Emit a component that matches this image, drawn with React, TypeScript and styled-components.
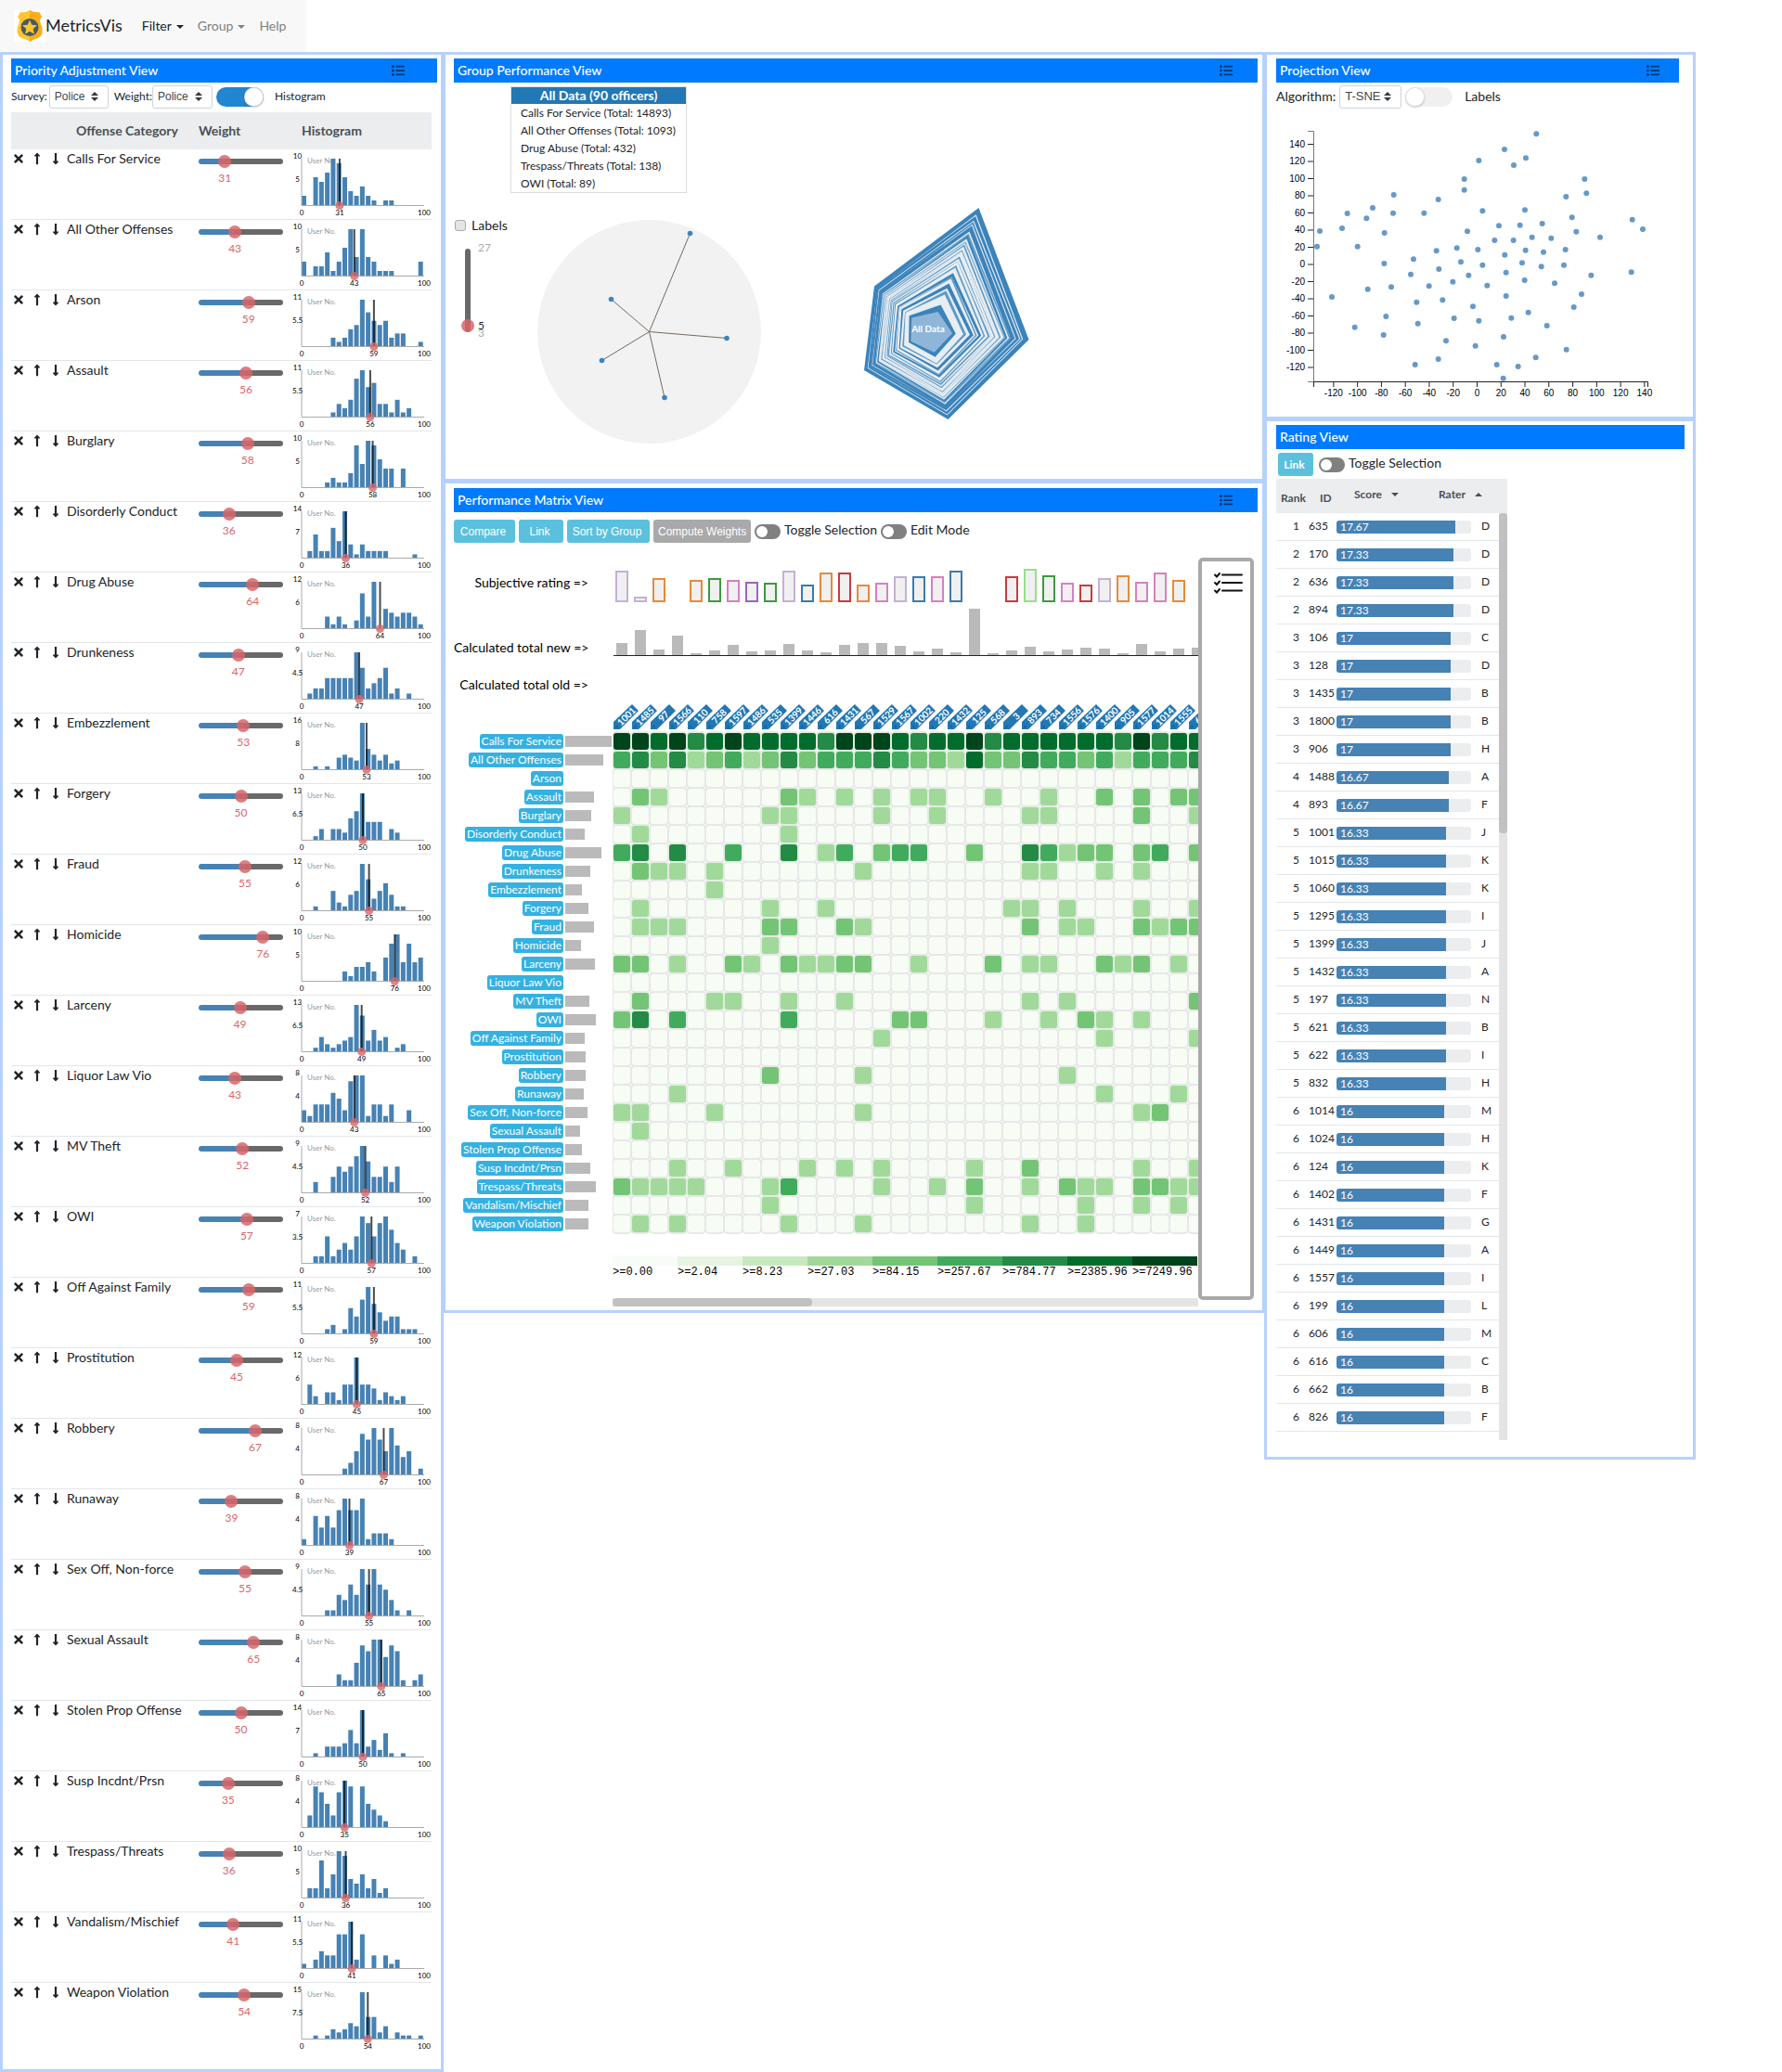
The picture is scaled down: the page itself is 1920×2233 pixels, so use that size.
import React, { useState } from "react";
import styled, { createGlobalStyle, css } from "styled-components";
import { FaList, FaTimes, FaLongArrowAltUp, FaLongArrowAltDown } from "react-icons/fa";

const STEEL = "#4682b4";
const INDIAN = "#d7666a";
const GREENS = ["#f7fcf5", "#e5f5e0", "#c7e9c0", "#a1d99b", "#74c476", "#41ab5d", "#238b45", "#006d2c", "#00441b"];
const SANS = `Lato, "Open Sans", sans-serif`;
const HELV = `"Liberation Sans", Arial, sans-serif`;

/* ------------------------------ data ------------------------------ */

type Offense = { name: string; weight: number; max: number; bins: number[]; bar: number; cells: Record<number, number> };

const offenses: Offense[] = [
  { name: "Calls For Service", weight: 31, max: 10, bins: [2,0,6,5,7,10,9,6,3,2,4,2,1,0,1,1,0,0,0,0,0], bar: 50,
    cells: Object.fromEntries([..."88786787777688876778677777768677"].map((d, i) => [i, +d])) },
  { name: "All Other Offenses", weight: 43, max: 10, bins: [3,0,2,2,5,1,3,6,10,4,10,4,3,1,1,1,0,0,0,0,3], bar: 41,
    cells: Object.fromEntries([..."56463453464555654437446554535556"].map((d, i) => [i, +d])) },
  { name: "Arson", weight: 59, max: 11, bins: [0,0,0,0,0,2,1,2,4,5,11,8,6,5,6,2,3,3,0,0,1], bar: 0, cells: {} },
  { name: "Assault", weight: 56, max: 11, bins: [0,0,0,0,0,1,3,2,4,9,11,7,8,3,3,1,4,1,2,0,0], bar: 31,
    cells: { 1: 4, 2: 3, 9: 4, 10: 3, 12: 3, 14: 3, 16: 3, 17: 3, 20: 3, 23: 3, 26: 4, 28: 4, 30: 4, 31: 4 } },
  { name: "Burglary", weight: 58, max: 10, bins: [0,0,0,0,1,2,1,1,3,9,5,10,9,6,4,4,0,4,0,0,0], bar: 28,
    cells: { 0: 3, 8: 3, 9: 3, 14: 3, 17: 3, 22: 3, 23: 3, 28: 4, 31: 3 } },
  { name: "Disorderly Conduct", weight: 36, max: 14, bins: [0,2,7,2,2,9,5,14,4,1,4,2,2,2,2,0,0,0,0,1,0], bar: 21,
    cells: { 1: 3, 9: 3 } },
  { name: "Drug Abuse", weight: 64, max: 12, bins: [0,0,0,0,3,1,3,1,0,2,9,3,12,0,5,4,3,4,4,3,1], bar: 39,
    cells: { 0: 5, 1: 6, 3: 6, 6: 5, 9: 6, 11: 3, 12: 5, 14: 4, 15: 5, 16: 5, 19: 4, 22: 6, 23: 5, 24: 3, 25: 4, 26: 4, 28: 4, 29: 5, 31: 4 } },
  { name: "Drunkeness", weight: 47, max: 9, bins: [0,1,2,2,4,4,4,4,4,9,6,2,3,4,6,1,2,0,1,0,0], bar: 27,
    cells: { 1: 4, 2: 3, 3: 3, 5: 3, 13: 3, 22: 3, 23: 3, 26: 3, 28: 3 } },
  { name: "Embezzlement", weight: 53, max: 16, bins: [0,0,1,0,1,0,4,5,4,3,16,7,5,3,5,2,3,0,0,0,0], bar: 18,
    cells: { 5: 3 } },
  { name: "Forgery", weight: 50, max: 13, bins: [0,0,1,3,0,3,3,2,6,8,13,5,5,5,0,3,2,0,0,0,0], bar: 25,
    cells: { 1: 3, 8: 3, 11: 3, 21: 3, 22: 3, 24: 3, 28: 3, 31: 3 } },
  { name: "Fraud", weight: 55, max: 12, bins: [0,0,1,0,0,5,2,1,4,5,12,8,3,5,7,4,1,1,0,0,0], bar: 31,
    cells: { 1: 3, 2: 3, 3: 3, 8: 4, 9: 4, 12: 4, 13: 3, 22: 4, 24: 3, 25: 3, 28: 4, 29: 3, 30: 4, 31: 4 } },
  { name: "Homicide", weight: 76, max: 10, bins: [0,0,0,0,0,0,0,2,1,3,3,4,2,0,5,8,10,4,8,4,5], bar: 17,
    cells: { 8: 3 } },
  { name: "Larceny", weight: 49, max: 13, bins: [0,0,1,4,2,1,2,3,4,13,10,3,6,3,4,0,1,2,0,0,0], bar: 32,
    cells: { 0: 4, 1: 4, 3: 3, 6: 4, 7: 3, 9: 4, 10: 3, 11: 3, 12: 4, 13: 4, 16: 3, 20: 4, 22: 3, 23: 3, 26: 4, 27: 3, 28: 4, 30: 3 } },
  { name: "Liquor Law Vio", weight: 43, max: 8, bins: [2,1,3,3,3,5,4,2,7,8,8,1,3,3,1,3,0,0,2,0,0], bar: 0, cells: {} },
  { name: "MV Theft", weight: 52, max: 9, bins: [0,0,2,0,0,3,5,4,5,7,9,6,3,3,5,2,5,0,0,0,0], bar: 26,
    cells: { 1: 4, 5: 3, 6: 3, 9: 3, 12: 3, 22: 3, 24: 3, 31: 4 } },
  { name: "OWI", weight: 57, max: 7, bins: [0,0,1,1,4,1,2,3,2,4,7,6,4,6,7,5,3,2,0,1,0], bar: 33,
    cells: { 0: 4, 1: 6, 3: 5, 9: 5, 15: 4, 16: 4, 20: 3, 23: 3, 25: 4, 26: 3, 28: 3 } },
  { name: "Off Against Family", weight: 59, max: 11, bins: [0,0,0,0,1,2,0,1,6,4,8,11,7,5,3,4,4,1,1,1,0], bar: 21,
    cells: { 14: 3, 26: 3, 31: 3 } },
  { name: "Prostitution", weight: 45, max: 12, bins: [0,5,2,0,3,3,1,5,5,12,5,5,4,1,3,2,1,2,0,0,0], bar: 22, cells: {} },
  { name: "Robbery", weight: 67, max: 8, bins: [0,0,0,0,0,0,0,1,2,4,7,6,8,6,4,8,5,3,4,0,1], bar: 22,
    cells: { 8: 4, 13: 3, 24: 3 } },
  { name: "Runaway", weight: 39, max: 8, bins: [1,0,5,3,5,3,6,8,6,6,8,1,2,2,2,1,0,0,0,0,0], bar: 20,
    cells: { 3: 3, 26: 3, 30: 3 } },
  { name: "Sex Off, Non-force", weight: 55, max: 9, bins: [0,0,0,0,1,1,4,3,6,4,9,6,9,6,5,3,1,0,1,0,0], bar: 24,
    cells: { 0: 3, 1: 3, 5: 3, 13: 3, 28: 3, 29: 4 } },
  { name: "Sexual Assault", weight: 65, max: 8, bins: [0,0,0,0,0,0,2,1,1,4,7,6,8,8,5,7,6,1,0,1,2], bar: 16,
    cells: { 1: 3 } },
  { name: "Stolen Prop Offense", weight: 50, max: 14, bins: [0,0,1,0,3,3,3,4,8,4,14,3,5,2,7,1,0,1,0,0,0], bar: 18, cells: {} },
  { name: "Susp Incdnt/Prsn", weight: 35, max: 8, bins: [0,2,7,6,4,2,6,8,7,0,7,4,3,2,1,0,0,0,0,0,0], bar: 27,
    cells: { 3: 3, 6: 3, 10: 3, 12: 3, 14: 3, 19: 3, 22: 4, 28: 3, 31: 3 } },
  { name: "Trespass/Threats", weight: 36, max: 10, bins: [0,2,2,8,2,5,10,9,4,3,5,2,4,1,2,0,0,0,0,0,0], bar: 33,
    cells: { 0: 4, 1: 3, 2: 3, 3: 3, 4: 3, 8: 3, 9: 5, 14: 3, 17: 3, 19: 4, 22: 3, 24: 4, 25: 3, 26: 3, 28: 4, 29: 4, 30: 3, 31: 3 } },
  { name: "Vandalism/Mischief", weight: 41, max: 11, bins: [1,0,2,4,3,3,8,8,11,2,8,0,3,0,3,1,2,0,0,0,0], bar: 25,
    cells: { 8: 3, 19: 3, 25: 3, 28: 3, 30: 3 } },
  { name: "Weapon Violation", weight: 54, max: 15, bins: [0,0,1,0,1,3,2,3,5,4,15,7,7,2,4,0,2,1,1,0,1], bar: 25,
    cells: { 1: 3, 3: 3, 9: 3, 13: 3, 22: 3, 25: 3 } },
];

const LILAC = "#c5b0d5", ORANGE = "#e9893a", GREEN = "#3c9a3c", PINK = "#d77fc0", PURPLE = "#9467bd", BLUE = "#3a7bae", RED = "#c73c3a", LIME = "#98df8a";

type Officer = { id: string; total: number; rating?: [number, string] };
const officers: Officer[] = [
  { id: "1001", total: 13, rating: [33, LILAC] }, { id: "1485", total: 27, rating: [5, LILAC] },
  { id: "97", total: 6, rating: [25, ORANGE] }, { id: "1566", total: 21 },
  { id: "110", total: 2, rating: [23, ORANGE] }, { id: "758", total: 5, rating: [25, GREEN] },
  { id: "1597", total: 11, rating: [23, PINK] }, { id: "1486", total: 4, rating: [21, PURPLE] },
  { id: "535", total: 5, rating: [20, GREEN] }, { id: "1399", total: 12, rating: [33, LILAC] },
  { id: "1446", total: 5, rating: [18, BLUE] }, { id: "616", total: 3, rating: [31, ORANGE] },
  { id: "1431", total: 11, rating: [31, RED] }, { id: "567", total: 13, rating: [18, ORANGE] },
  { id: "1529", total: 13, rating: [20, PINK] }, { id: "1567", total: 10, rating: [27, LILAC] },
  { id: "1002", total: 4, rating: [27, BLUE] }, { id: "220", total: 7, rating: [27, PINK] },
  { id: "1432", total: 3, rating: [33, BLUE] }, { id: "125", total: 50 },
  { id: "568", total: 2 }, { id: "3", total: 5, rating: [27, RED] },
  { id: "893", total: 9, rating: [35, LIME] }, { id: "734", total: 4, rating: [28, GREEN] },
  { id: "1556", total: 6, rating: [20, PINK] }, { id: "1576", total: 8, rating: [18, RED] },
  { id: "1400", total: 7, rating: [25, LILAC] }, { id: "905", total: 2, rating: [28, ORANGE] },
  { id: "1577", total: 12, rating: [21, PINK] }, { id: "1014", total: 4, rating: [31, PINK] },
  { id: "1555", total: 7, rating: [23, ORANGE] }, { id: "620", total: 8 },
];

const legend = ["0.00", "2.04", "8.23", "27.03", "84.15", "257.67", "784.77", "2385.96", "7249.96"];

const ratings: [number, string, number, string][] = [
  [1, "635", 17.67, "D"], [2, "170", 17.33, "D"], [2, "636", 17.33, "D"], [2, "894", 17.33, "D"],
  [3, "106", 17, "C"], [3, "128", 17, "D"], [3, "1435", 17, "B"], [3, "1800", 17, "B"], [3, "906", 17, "H"],
  [4, "1488", 16.67, "A"], [4, "893", 16.67, "F"],
  [5, "1001", 16.33, "J"], [5, "1015", 16.33, "K"], [5, "1060", 16.33, "K"], [5, "1295", 16.33, "I"],
  [5, "1399", 16.33, "J"], [5, "1432", 16.33, "A"], [5, "197", 16.33, "N"], [5, "621", 16.33, "B"],
  [5, "622", 16.33, "I"], [5, "832", 16.33, "H"],
  [6, "1014", 16, "M"], [6, "1024", 16, "H"], [6, "124", 16, "K"], [6, "1402", 16, "F"], [6, "1431", 16, "G"],
  [6, "1449", 16, "A"], [6, "1557", 16, "I"], [6, "199", 16, "L"], [6, "606", 16, "M"], [6, "616", 16, "C"],
  [6, "662", 16, "B"], [6, "826", 16, "F"],
];

/* Projection points, kept at three units per chart pixel. */
const POINT_UNITS = 3;
const projection: [number, number][] = [
  [916,313],[813,363],[882,391],[730,399],[843,414],[683,459],[683,494],[1072,459],[1078,505],[1012,516],
  [455,510],[599,525],[387,552],[305,570],[367,586],[453,569],[553,569],[742,562],[879,559],[1031,583],
  [1226,590],[1260,621],[216,627],[288,618],[425,633],[795,610],[863,608],[935,603],[693,628],[1045,629],
  [902,647],[964,650],[1122,647],[781,657],[842,657],[207,677],[338,677],[659,682],[727,687],[593,691],
  [881,689],[939,695],[1010,687],[519,718],[814,704],[672,727],[424,732],[742,737],[870,730],[932,742],
  [1005,737],[601,750],[510,767],[697,770],[818,761],[1093,770],[1223,760],[646,791],[878,786],[975,796],
  [447,808],[569,805],[757,803],[371,815],[255,840],[818,837],[1062,831],[529,857],[613,850],[711,871],
  [1037,873],[890,890],[430,903],[650,909],[835,908],[730,917],[533,926],[950,933],[329,938],[422,963],
  [810,969],[624,982],[719,998],[1013,1010],[914,1036],[599,1041],[524,1059],[788,1059],[857,1065],[809,1103],
];

/* ------------------------------ shared parts ------------------------------ */

const GlobalStyle = createGlobalStyle`
  * { box-sizing: border-box; }
  body { margin: 0; background: #fff; color: #212529; font-family: ${SANS}; font-size: 14px; line-height: 20px; }
  button, input, select { font-family: inherit; margin: 0; }
`;

const NavBar = styled.nav`
  display: flex;
  align-items: center;
  width: fit-content;
  height: 56px;
  padding: 0 22px 0 15px;
  background: #f8f8f8;
`;

const Brand = styled.a`
  display: flex;
  align-items: center;
  margin-right: 21px;
  color: #212529;
  text-decoration: none;
`;

const BrandName = styled.span`
  padding-bottom: 3px;
  font-size: 18px;
`;

const LogoTile = styled.span`
  display: flex;
  justify-content: center;
  width: 34px;
  height: 34px;
  background: #fff;
`;

const navItem = css<{ $muted?: boolean }>`
  padding: 0;
  border: 0;
  background: none;
  color: ${(p) => (p.$muted ? "#808080" : "#212529")};
  font-size: 14px;
  line-height: 20px;
  text-decoration: none;
`;

const NavButton = styled.button<{ $muted?: boolean }>`
  ${navItem}
  display: flex;
  align-items: center;
  gap: 5px;
  margin-right: 15px;
`;

const NavLink = styled.a<{ $muted?: boolean }>`
  ${navItem}
`;

const Caret = styled.span<{ $up?: boolean }>`
  width: 0;
  height: 0;
  margin-top: 2px;
  border: 4px solid transparent;
  border-${(p) => (p.$up ? "top" : "bottom")}-width: 0;
  border-${(p) => (p.$up ? "bottom" : "top")}-color: currentColor;
`;

const Dashboard = styled.main`
  display: grid;
  grid-template-columns: 478fr 885fr 464fr 93fr;
  align-items: start;
`;

const Column = styled.div<{ $joined?: boolean }>`
  display: flex;
  flex-direction: column;
  min-width: 0;
  margin-left: ${(p) => (p.$joined ? "-1px" : 0)};
`;

const Panel = styled.section<{ $pad: string }>`
  border: 3px solid #b7d1ff;
  padding: ${(p) => p.$pad};
  & + & {
    margin-top: -1px;
  }
`;

const PanelHeader = styled.header<{ $right?: number }>`
  display: flex;
  align-items: center;
  justify-content: space-between;
  height: 26px;
  padding: 0 ${(p) => p.$right ?? 21}px 0 4px;
  background: #007bff;
`;

const PanelTitle = styled.h2`
  margin: 0;
  color: #fff;
  font-size: 14px;
  font-weight: 500;
  line-height: 20px;
`;

const MenuButton = styled.button`
  display: flex;
  align-items: center;
  justify-content: center;
  width: 27px;
  height: 24px;
  padding: 0;
  border: 1px solid #0f74e6;
  border-radius: 3px;
  background: none;
  color: #08356f;
  font-size: 14px;
  stroke: currentColor;
  stroke-width: 24px;
`;

const Toolbar = styled.div<{ $gap?: number; $top?: number }>`
  display: flex;
  align-items: center;
  gap: ${(p) => p.$gap ?? 0}px;
  padding-top: ${(p) => p.$top ?? 3}px;
`;

const FieldLabel = styled.label<{ $size?: number }>`
  padding-bottom: 2px;
  font-size: ${(p) => p.$size ?? 12}px;
  white-space: nowrap;
`;

const SelectBox = styled.span<{ $width: number }>`
  position: relative;
  display: flex;
  width: ${(p) => p.$width}px;
  svg {
    position: absolute;
    right: 11px;
    top: 7px;
    pointer-events: none;
  }
`;

const Select = styled.select<{ $size?: number }>`
  width: 100%;
  height: 25px;
  padding: 0 0 2px 5px;
  appearance: none;
  border: 1px solid #ced4da;
  border-radius: 3px;
  background: #fff;
  color: #3f454b;
  font-family: ${HELV};
  font-size: ${(p) => p.$size ?? 12}px;
`;

const SortGlyph = () => (
  <svg width="8" height="10" viewBox="0 0 8 10" fill="#343a40" aria-hidden="true">
    <path d="M4 0 8 4H0zM4 10 0 6h8z" />
  </svg>
);

const WideSwitch = styled.input`
  position: relative;
  width: 51px;
  height: 21px;
  appearance: none;
  border-radius: 11px;
  background: #f0f0f0;
  &::before {
    content: "";
    position: absolute;
    top: 0;
    left: 0;
    width: 21px;
    height: 21px;
    border-radius: 50%;
    background: #fff;
    box-shadow: 0 1px 2px rgba(34, 36, 38, 0.2), 0 0 0 1px rgba(34, 36, 38, 0.15) inset;
  }
  &:checked {
    background: #2185d0;
  }
  &:checked::before {
    left: 30px;
  }
`;

const SmallSwitch = styled.input`
  position: relative;
  width: 28px;
  height: 16px;
  appearance: none;
  border-radius: 8px;
  background: #808080;
  &::before {
    content: "";
    position: absolute;
    top: 2px;
    left: 2px;
    width: 12px;
    height: 12px;
    border-radius: 50%;
    background: #fff;
  }
  &:checked::before {
    left: 14px;
  }
`;

const SwitchLabel = styled.label`
  display: flex;
  align-items: center;
  gap: 4px;
  padding-bottom: 3px;
  font-size: 14px;
  input {
    margin-top: 4px;
  }
`;

const ActionButton = styled.button<{ $width: number; $muted?: boolean; $lato?: boolean }>`
  width: ${(p) => p.$width}px;
  height: 25px;
  padding: 0 8px 0 5px;
  border: 0;
  border-radius: 3px;
  background: ${(p) => (p.$muted ? "#a9a9a9" : "#5bc0de")};
  color: #fff;
  font-family: ${(p) => (p.$lato ? SANS : HELV)};
  font-size: 12px;
  font-weight: ${(p) => (p.$lato ? 700 : 400)};
  white-space: nowrap;
`;

/* ------------------------------ priority view ------------------------------ */

const OffenseTable = styled.table`
  width: calc(100% - 6px);
  margin-top: 4px;
  margin-bottom: 17px;
  border-collapse: separate;
  border-spacing: 0;
  table-layout: fixed;
`;

const HeadCell = styled.th<{ $left?: number }>`
  height: 40px;
  padding: 0 0 0 ${(p) => p.$left ?? 0}px;
  background: #ebedee;
  color: #495057;
  font-size: 14px;
  font-weight: 700;
  text-align: left;
`;

const Cell = styled.td<{ $left?: number }>`
  height: 76px;
  padding: 0 0 0 ${(p) => p.$left ?? 0}px;
  border-bottom: 1px solid #e3e6e9;
  vertical-align: top;
  white-space: nowrap;
`;

const OffenseRow = styled.tr`
  &:last-child ${Cell} {
    border-bottom-color: transparent;
  }
`;

const RowActions = styled.div`
  display: flex;
`;

const IconButton = styled.button`
  display: flex;
  align-items: center;
  justify-content: center;
  width: 20px;
  height: 20px;
  padding: 0;
  border: 0;
  background: none;
  color: #212529;
  font-size: 14px;
  &:first-child {
    width: 16px;
    margin-right: 2px;
    stroke: currentColor;
    stroke-width: 40px;
  }
`;

const SliderBox = styled.div`
  position: relative;
  width: 91px;
  height: 26px;
`;

const SliderTrack = styled.div`
  position: absolute;
  left: 0;
  right: 0;
  top: 10px;
  height: 6px;
  border-radius: 3px;
`;

const thumb = css`
  width: 14px;
  height: 14px;
  appearance: none;
  border: 0;
  border-radius: 50%;
  background: ${INDIAN};
  opacity: 0.85;
`;

const SliderInput = styled.input`
  position: absolute;
  left: -7px;
  top: 6px;
  width: 105px;
  height: 14px;
  appearance: none;
  background: transparent;
  &::-webkit-slider-thumb {
    ${thumb}
  }
`;

const SliderValue = styled.output`
  position: absolute;
  top: 21px;
  width: 20px;
  margin-left: -10px;
  color: ${INDIAN};
  font-size: 12px;
  text-align: center;
`;

const Chart = styled.svg<{ $font?: string }>`
  display: block;
  overflow: visible;
  font-family: ${(p) => p.$font ?? SANS};
`;

function Histogram({ offense }: { offense: Offense }) {
  const { bins, max, weight } = offense;
  const base = 60;
  const full = 50;
  const x0 = 12;
  const span = 132;
  const step = span / bins.length;
  const mark = x0 + (weight / 100) * span;
  return (
    <Chart width="152" height="74" fontSize="8" fill="#000">
      <text x={x0 + 6} y="15" fill="#999">User No.</text>
      {bins.map((n, i) =>
        n ? <rect key={i} x={x0 + i * step} y={base - (n / max) * full} width="5" height={(n / max) * full} fill={STEEL} /> : null,
      )}
      <path d={`M${x0} 10V${base + 0.5}H${x0 + span}`} fill="none" stroke="#aaa" />
      <line x1={mark} x2={mark} y1="10" y2={base} stroke="#000" strokeWidth="2" opacity="0.7" />
      <text x="7.5" y="10" textAnchor="middle">{max}</text>
      <text x="7.5" y="35" textAnchor="middle">{max / 2}</text>
      <circle cx={mark} cy={base + 0.5} r="4.5" fill={INDIAN} opacity="0.8" />
      <text x={x0} y="71" textAnchor="middle">0</text>
      <text x={mark} y="71" textAnchor="middle">{weight}</text>
      <text x={x0 + span} y="71" textAnchor="middle">100</text>
    </Chart>
  );
}

function OffenseItem({ offense }: { offense: Offense }) {
  const [weight, setWeight] = useState(offense.weight);
  return (
    <OffenseRow>
      <Cell>
        <RowActions>
          <IconButton aria-label="Remove"><FaTimes /></IconButton>
          <IconButton aria-label="Move up"><FaLongArrowAltUp /></IconButton>
          <IconButton aria-label="Move down"><FaLongArrowAltDown /></IconButton>
        </RowActions>
      </Cell>
      <Cell>{offense.name}</Cell>
      <Cell $left={12}>
        <SliderBox>
          <SliderTrack style={{ background: `linear-gradient(90deg, ${STEEL} ${weight}%, #696969 ${weight}%)` }} />
          <SliderInput
            type="range"
            min="0"
            max="100"
            aria-label={`${offense.name} weight`}
            value={weight}
            onChange={(e) => setWeight(+e.target.value)}
          />
          <SliderValue style={{ left: `${weight}%` }}>{weight}</SliderValue>
        </SliderBox>
      </Cell>
      <Cell><Histogram offense={{ ...offense, weight }} /></Cell>
    </OffenseRow>
  );
}

const Spaced = styled.span<{ $left: number }>`
  display: flex;
  align-items: center;
  margin-left: ${(p) => p.$left}px;
`;

function PriorityView() {
  return (
    <Panel $pad="4px 4px 0 9px">
      <PanelHeader $right={29}>
        <PanelTitle>Priority Adjustment View</PanelTitle>
        <MenuButton aria-label="Priority options"><FaList /></MenuButton>
      </PanelHeader>
      <Toolbar>
        <FieldLabel htmlFor="survey">Survey:</FieldLabel>
        <Spaced $left={2}>
          <SelectBox $width={64}>
            <Select id="survey"><option>Police</option></Select>
            <SortGlyph />
          </SelectBox>
        </Spaced>
        <Spaced $left={6}><FieldLabel htmlFor="weight">Weight:</FieldLabel></Spaced>
        <SelectBox $width={65}>
          <Select id="weight"><option>Police</option></Select>
          <SortGlyph />
        </SelectBox>
        <Spaced $left={4}><WideSwitch id="histogram" type="checkbox" defaultChecked /></Spaced>
        <Spaced $left={12}><FieldLabel htmlFor="histogram">Histogram</FieldLabel></Spaced>
      </Toolbar>
      <OffenseTable>
        <colgroup>
          <col style={{ width: 60 }} />
          <col style={{ width: 130 }} />
          <col style={{ width: 111 }} />
          <col />
        </colgroup>
        <thead>
          <tr>
            <HeadCell aria-label="Actions" />
            <HeadCell $left={10}>Offense Category</HeadCell>
            <HeadCell $left={12}>Weight</HeadCell>
            <HeadCell $left={12}>Histogram</HeadCell>
          </tr>
        </thead>
        <tbody>
          {offenses.map((o) => <OffenseItem key={o.name} offense={o} />)}
        </tbody>
      </OffenseTable>
    </Panel>
  );
}

/* ------------------------------ group view ------------------------------ */

const GroupBody = styled.div`
  height: 427px;
  padding-top: 4px;
`;

const SummaryTable = styled.table`
  width: 190px;
  margin-left: 61px;
  border: 1px solid #ddd;
  border-collapse: collapse;
  th {
    height: 18px;
    padding: 0;
    background: #2277b5;
    color: #fff;
    font-size: 14px;
    line-height: 18px;
  }
  td {
    padding: 0 0 0 10px;
    font-size: 12px;
    line-height: 19px;
    white-space: nowrap;
  }
`;

const GroupCharts = styled.div`
  display: flex;
  padding-top: 4px;
`;

const GroupControls = styled.div`
  width: 71px;
  padding-top: 21px;
`;

const CheckLabel = styled.label`
  display: flex;
  align-items: center;
  gap: 6px;
  font-size: 14px;
  input {
    width: 12px;
    height: 12px;
    margin: 0 0 0 1px;
    appearance: none;
    border: 1px solid #aaa;
    border-radius: 3px;
    background: #e4e4e4;
  }
`;

const SizeSlider = styled.div`
  position: relative;
  width: 14px;
  height: 90px;
  margin: 15px 0 0 8px;
  font-size: 12px;
  line-height: 14px;
`;

const SizeTrack = styled.div`
  width: 6px;
  height: 90px;
  margin-left: 4px;
  border-radius: 3px;
  background: #696969;
`;

const SizeInput = styled.input`
  position: absolute;
  left: 0;
  top: -7px;
  width: 14px;
  height: 104px;
  appearance: none;
  writing-mode: vertical-lr;
  direction: rtl;
  background: transparent;
  &::-webkit-slider-thumb {
    ${thumb}
  }
`;

const SizeMark = styled.span<{ $top: number; $muted?: boolean }>`
  position: absolute;
  left: 18px;
  top: ${(p) => p.$top}px;
  color: ${(p) => (p.$muted ? "#aaa" : "#212529")};
`;

const starTips: [number, number][] = [[183.5, 39.5], [223, 152.5], [156, 216.5], [88.5, 176.5], [98.5, 110.5]];
const ringOuter: [number, number][] = [[494.5, 12], [548.5, 154], [461.5, 240], [371, 187], [382, 96.5]];
const ringInner: [number, number][] = [[449, 128], [462, 147], [446, 165], [424, 154], [424, 132]];
const rings: [number, string][] = [
  [1, "#3b83bb"], [0.93, "#dfe9f1"], [0.92, "#3b83bb"], [0.885, "#e8edf1"], [0.875, "#3b83bb"], [0.84, "#d6e3ee"],
  [0.83, "#3b83bb"], [0.78, "#e8edf1"], [0.765, "#5d9ac8"], [0.75, "#e8edf1"], [0.735, "#3b83bb"], [0.71, "#dfe9f1"],
  [0.69, "#78aad0"], [0.68, "#e8edf1"], [0.65, "#5d9ac8"], [0.635, "#e8edf1"], [0.61, "#78aad0"], [0.6, "#e8edf1"],
  [0.58, "#5d9ac8"], [0.57, "#e8edf1"], [0.545, "#5d9ac8"], [0.53, "#e8edf1"], [0.51, "#5d9ac8"], [0.49, "#e8edf1"],
  [0.46, "#5d9ac8"], [0.445, "#e8edf1"], [0.4, "#3b83bb"], [0.37, "#e8edf1"], [0.355, "#5d9ac8"], [0.34, "#e8edf1"],
  [0.3, "#3b83bb"], [0.26, "#e8edf1"], [0.22, "#5d9ac8"], [0.19, "#e8edf1"], [0.1, "#3b83bb"], [0.04, "#8fb6d9"],
];

function GroupView() {
  return (
    <Panel $pad="4px 5px 0 9px">
      <PanelHeader>
        <PanelTitle>Group Performance View</PanelTitle>
        <MenuButton aria-label="Group options"><FaList /></MenuButton>
      </PanelHeader>
      <GroupBody>
        <SummaryTable>
          <thead><tr><th>All Data (90 officers)</th></tr></thead>
          <tbody>
            <tr><td>Calls For Service (Total: 14893)</td></tr>
            <tr><td>All Other Offenses (Total: 1093)</td></tr>
            <tr><td>Drug Abuse (Total: 432)</td></tr>
            <tr><td>Trespass/Threats (Total: 138)</td></tr>
            <tr><td>OWI (Total: 89)</td></tr>
          </tbody>
        </SummaryTable>
        <GroupCharts>
          <GroupControls>
            <CheckLabel><input type="checkbox" />Labels</CheckLabel>
            <SizeSlider>
              <SizeTrack />
              <SizeInput type="range" min="3" max="27" defaultValue="5" aria-label="Minimum group size" />
              <SizeMark $top={-8} $muted>27</SizeMark>
              <SizeMark $top={84} $muted>3</SizeMark>
              <SizeMark $top={76}>5</SizeMark>
            </SizeSlider>
          </GroupControls>
          <Chart width="580" height="296">
            <circle cx="139.5" cy="145.5" r="120.5" fill="#f2f2f2" />
            {starTips.map(([x, y], i) => (
              <g key={i}>
                <line x1="139.5" y1="145.5" x2={x} y2={y} stroke="#73695f" />
                <circle cx={x} cy={y} r="2.8" fill="#3b84c0" />
              </g>
            ))}
            {rings.map(([t, fill], i) => (
              <polygon
                key={i}
                fill={fill}
                points={ringOuter
                  .map(([x, y], k) => {
                    const u = Math.min(1, t + (t < 1 ? (((i * 7 + k * 5) % 9) - 4) / 400 : 0));
                    return `${ringInner[k][0] + (x - ringInner[k][0]) * u},${ringInner[k][1] + (y - ringInner[k][1]) * u}`;
                  })
                  .join(" ")}
              />
            ))}
            <text x="440" y="146" textAnchor="middle" fontSize="10" fontWeight="700" fill="#fff">All Data</text>
          </Chart>
        </GroupCharts>
      </GroupBody>
    </Panel>
  );
}

/* ------------------------------ matrix view ------------------------------ */

const MatrixBody = styled.div`
  display: flex;
  padding: 16px 4px 4px 0;
`;

const RowLabels = styled.div`
  flex: none;
  width: 171px;
`;

const SeriesLabel = styled.div<{ $top: number }>`
  margin-top: ${(p) => p.$top}px;
  padding-right: 26px;
  color: #000;
  text-align: right;
  white-space: nowrap;
`;

const TagList = styled.ul`
  margin: 41px 0 0;
  padding: 0;
  list-style: none;
`;

const TagRow = styled.li`
  display: flex;
  align-items: center;
  height: 20px;
`;

const TagCell = styled.span`
  display: flex;
  justify-content: flex-end;
  width: 118px;
  margin-right: 2px;
`;

const Tag = styled.span`
  padding: 0 2px;
  border-radius: 3px;
  background: #35b1e1;
  color: #fff;
  font-size: 12px;
  line-height: 16px;
`;

const TagBar = styled.span`
  height: 12px;
  background: #bababa;
`;

const ScrollPane = styled.div`
  flex: 1;
  min-width: 0;
  overflow: hidden;
`;

const Legend = styled.ol`
  display: flex;
  width: 630px;
  margin: 0 0 20px;
  padding: 0;
  list-style: none;
`;

const LegendStep = styled.li<{ $color: string }>`
  width: 70px;
  border-top: 10px solid ${(p) => p.$color};
  color: #000;
  font-family: "Liberation Mono", monospace;
  font-size: 12px;
  line-height: 15px;
`;

const ScrollTrack = styled.div`
  height: 9px;
  background: #e4e4e4;
`;

const ScrollThumb = styled.div`
  width: 34%;
  height: 9px;
  border-radius: 4px;
  background: #c1c1c1;
`;

const SideDrawer = styled.aside`
  flex: none;
  width: 60px;
  height: 800px;
  padding: 10px 0 0 12px;
  border: 4px solid #a9a9a9;
  border-radius: 5px;
`;

const DrawerButton = styled.button`
  padding: 0;
  border: 0;
  background: none;
`;

function MatrixChart() {
  return (
    <Chart width="660" height="753">
      {officers.map((o, c) => {
        const x = c * 20;
        return (
          <g key={o.id}>
            {o.rating && (
              <rect x={x + 4} y={48 - o.rating[0]} width="12" height={Math.max(o.rating[0] - 1, 2)} fill="#f0f0f0" stroke={o.rating[1]} strokeWidth="2" />
            )}
            <rect x={x + 4} y={105 - o.total} width="12" height={o.total} fill="#bababa" />
            <path d={`M${x + 1} 177v8h7l20 -20-7-7z`} fill="#2277b5" />
            <circle cx={x + 4.5} cy="182" r="1.5" fill="#1c659b" />
            {offenses.map((f, r) => {
              const level = f.cells[c] ?? 0;
              return (
                <rect
                  key={f.name}
                  x={x}
                  y={188 + r * 20}
                  width="20"
                  height="20"
                  rx="4"
                  fill={GREENS[level]}
                  stroke={level ? "#e1ece0" : "#e8e8e8"}
                  strokeWidth="2"
                />
              );
            })}
          </g>
        );
      })}
      {officers.map((o, c) => (
        <text
          key={o.id}
          transform={`translate(${c * 20 + 17.5} 173.5) rotate(-45)`}
          textAnchor="middle"
          fontSize="10"
          fontWeight="700"
          fill="#fff"
        >
          {o.id}
        </text>
      ))}
      <line x1="1" x2="660" y1="105.5" y2="105.5" stroke="#222" />
    </Chart>
  );
}

function MatrixView() {
  return (
    <Panel $pad="5px 5px 0 9px">
      <PanelHeader>
        <PanelTitle>Performance Matrix View</PanelTitle>
        <MenuButton aria-label="Matrix options"><FaList /></MenuButton>
      </PanelHeader>
      <Toolbar $gap={4} $top={8}>
        <ActionButton $width={66}>Compare</ActionButton>
        <ActionButton $width={48}>Link</ActionButton>
        <ActionButton $width={89}>Sort by Group</ActionButton>
        <ActionButton $width={105} $muted>Compute Weights</ActionButton>
        <SwitchLabel><SmallSwitch type="checkbox" />Toggle Selection</SwitchLabel>
        <SwitchLabel><SmallSwitch type="checkbox" />Edit Mode</SwitchLabel>
      </Toolbar>
      <MatrixBody>
        <RowLabels>
          <SeriesLabel $top={17}>Subjective rating =&gt;</SeriesLabel>
          <SeriesLabel $top={50}>Calculated total new =&gt;</SeriesLabel>
          <SeriesLabel $top={20}>Calculated total old =&gt;</SeriesLabel>
          <TagList>
            {offenses.map((o) => (
              <TagRow key={o.name}>
                <TagCell><Tag>{o.name}</Tag></TagCell>
                <TagBar style={{ width: o.bar }} />
              </TagRow>
            ))}
          </TagList>
        </RowLabels>
        <ScrollPane>
          <MatrixChart />
          <Legend>
            {legend.map((v, i) => <LegendStep key={v} $color={GREENS[i]}>&gt;={v}</LegendStep>)}
          </Legend>
          <ScrollTrack><ScrollThumb /></ScrollTrack>
        </ScrollPane>
        <SideDrawer>
          <DrawerButton aria-label="Column list">
            <svg width="32" height="25" viewBox="0 0 32 25" fill="none" stroke="#111" strokeWidth="2" strokeLinecap="round">
              <path d="M10 4.500H31M10 13H31M10 21.500H31" />
              <path d="M2 4.500 4 6.500 7 3M2 13 4 15 7 11.500M2 21.500 4 23.500 7 20" />
            </svg>
          </DrawerButton>
        </SideDrawer>
      </MatrixBody>
    </Panel>
  );
}

/* ------------------------------ projection view ------------------------------ */

const ProjectionBody = styled.div`
  padding: 9px 0 6px;
`;

function ProjectionChart() {
  const x = (v: number) => 216.5 + (v / 20) * 25.77;
  const y = (v: number) => 159 - (v / 20) * 18.5;
  const ticks = Array.from({ length: 14 }, (_, i) => -120 + i * 20);
  return (
    <Chart width="430" height="317" fontSize="10" $font={HELV}>
      <path d="M34 15.500H40.500V285.500H34" fill="none" stroke="#777" />
      <path d="M40.500 291V285.500H400.500V291" fill="none" stroke="#222" />
      {ticks.map((v) => (
        <g key={v}>
          <line x1="34" x2="40" y1={y(v)} y2={y(v)} stroke="#222" />
          <text x="31" y={y(v) + 3} textAnchor="end">{v}</text>
        </g>
      ))}
      {ticks.map((v) => (
        <g key={v}>
          <line x1={x(v)} x2={x(v)} y1="285" y2="291" stroke="#222" />
          <text x={x(v)} y="301" textAnchor="middle">{v}</text>
        </g>
      ))}
      {projection.map(([px, py], i) => (
        <circle key={i} cx={px / POINT_UNITS - 25} cy={py / POINT_UNITS - 86} r="3" fill="#6699c8" />
      ))}
    </Chart>
  );
}

function ProjectionView() {
  return (
    <Panel $pad="4px 15px 0 10px">
      <PanelHeader $right={15}>
        <PanelTitle>Projection View</PanelTitle>
        <MenuButton aria-label="Projection options"><FaList /></MenuButton>
      </PanelHeader>
      <Toolbar $gap={4}>
        <FieldLabel $size={14} htmlFor="algorithm">Algorithm:</FieldLabel>
        <SelectBox $width={67}>
          <Select id="algorithm" $size={13}><option>T-SNE</option></Select>
          <SortGlyph />
        </SelectBox>
        <WideSwitch id="point-labels" type="checkbox" />
        <Spaced $left={9}><FieldLabel $size={14} htmlFor="point-labels">Labels</FieldLabel></Spaced>
      </Toolbar>
      <ProjectionBody><ProjectionChart /></ProjectionBody>
    </Panel>
  );
}

/* ------------------------------ rating view ------------------------------ */

const RatingScroll = styled.div`
  display: grid;
  grid-template-columns: 240px 9px;
  width: 249px;
  margin-top: 3px;
  padding-bottom: 18px;
`;

const RatingBody = styled.div`
  padding-bottom: 9px;
`;

const RatingTable = styled.table`
  width: 249px;
  border-collapse: separate;
  border-spacing: 0;
  table-layout: fixed;
`;

const RatingHead = styled.th<{ $low?: boolean; $left?: number }>`
  height: 37px;
  padding: ${(p) => (p.$low ? "4px" : "0")} 0 ${(p) => (p.$low ? "0" : "5px")} ${(p) => p.$left ?? 0}px;
  background: #ebedee;
  color: #495057;
  font-size: 12px;
  font-weight: 700;
  text-align: left;
`;

const SortButton = styled.button`
  display: flex;
  align-items: center;
  gap: 10px;
  padding: 0;
  border: 0;
  background: none;
  color: #495057;
  font-size: 12px;
  font-weight: 700;
`;

const RatingCell = styled.td<{ $right?: boolean }>`
  height: 30px;
  padding: 0 ${(p) => (p.$right ? 10 : 0)}px 1px 0;
  border-bottom: 1px solid #e3e6e9;
  font-size: 12px;
  text-align: ${(p) => (p.$right ? "right" : "left")};
`;

const ScoreTrack = styled.div`
  width: 145px;
  height: 14px;
  margin-top: 2px;
  border-radius: 3px;
  background: #ebedee;
`;

const ScoreFill = styled.div`
  height: 14px;
  padding-left: 4px;
  border-radius: 3px 0 0 3px;
  background: ${STEEL};
  color: #fff;
  line-height: 14px;
`;

const RatingTrack = styled.div`
  position: relative;
  margin-top: 37px;
  background: #e4e4e4;
`;

const RatingThumb = styled.div`
  height: 345px;
  border-radius: 4px;
  background: #c1c1c1;
`;

const Indent = styled.div`
  padding-left: 2px;
`;

function RatingView() {
  return (
    <Panel $pad="4px 9px 0 10px">
      <PanelHeader>
        <PanelTitle>Rating View</PanelTitle>
      </PanelHeader>
      <Indent>
        <Toolbar $gap={6} $top={4}>
          <ActionButton $width={38} $lato>Link</ActionButton>
          <SwitchLabel><SmallSwitch type="checkbox" />Toggle Selection</SwitchLabel>
        </Toolbar>
      </Indent>
      <RatingScroll>
        <RatingBody>
          <RatingTable>
            <colgroup>
              <col style={{ width: 35 }} />
              <col style={{ width: 30 }} />
              <col style={{ width: 110 }} />
              <col style={{ width: 46 }} />
              <col />
            </colgroup>
            <thead>
              <tr>
                <RatingHead $low $left={5}>Rank</RatingHead>
                <RatingHead $low $left={12}>ID</RatingHead>
                <RatingHead $left={19}>
                  <SortButton>Score <Caret /></SortButton>
                </RatingHead>
                <RatingHead colSpan={2}>
                  <SortButton>Rater <Caret $up /></SortButton>
                </RatingHead>
              </tr>
            </thead>
            <tbody>
              {ratings.map(([rank, id, score, rater]) => (
                <tr key={id}>
                  <RatingCell $right>{rank}</RatingCell>
                  <RatingCell>{id}</RatingCell>
                  <RatingCell colSpan={2}>
                    <ScoreTrack><ScoreFill style={{ width: `${(score / 20) * 100}%` }}>{score}</ScoreFill></ScoreTrack>
                  </RatingCell>
                  <RatingCell>{rater}</RatingCell>
                </tr>
              ))}
            </tbody>
          </RatingTable>
        </RatingBody>
        <RatingTrack><RatingThumb /></RatingTrack>
      </RatingScroll>
    </Panel>
  );
}

/* ------------------------------ page ------------------------------ */

const BadgeLogo = () => (
  <svg width="28" height="34" viewBox="0 0 28 34" aria-hidden="true">
    <path d="M4 2Q9 3 14 0Q19 3 24 2L27 7Q24 10 25.500 14Q28 19 27.500 24Q26 30 18 31.500L14 34L10 31.500Q2 30 .5 24Q0 19 2.500 14Q4 10 1 7z" fill="#ffc52f" />
    <path d="M14 0Q19 3 24 2L27 7Q24 10 25.500 14Q28 19 27.500 24Q26 30 18 31.500L14 34z" fill="#fbae17" />
    <circle cx="14" cy="18.500" r="9.500" fill="#455a64" />
    <path d="M14 10.500l2.300 5.200 5.700.600-4.300 3.800 1.300 5.600L14 22.800l-5 2.900 1.300-5.600L6 16.300l5.700-.600z" fill="#ffc52f" />
  </svg>
);

export default function App() {
  return (
    <>
      <GlobalStyle />
      <NavBar>
        <Brand href="#">
          <LogoTile><BadgeLogo /></LogoTile>
          <BrandName>MetricsVis</BrandName>
        </Brand>
        <NavButton>Filter <Caret /></NavButton>
        <NavButton $muted>Group <Caret /></NavButton>
        <NavLink href="#help" $muted>Help</NavLink>
      </NavBar>
      <Dashboard>
        <Column><PriorityView /></Column>
        <Column $joined>
          <GroupView />
          <MatrixView />
        </Column>
        <Column $joined>
          <ProjectionView />
          <RatingView />
        </Column>
      </Dashboard>
    </>
  );
}
